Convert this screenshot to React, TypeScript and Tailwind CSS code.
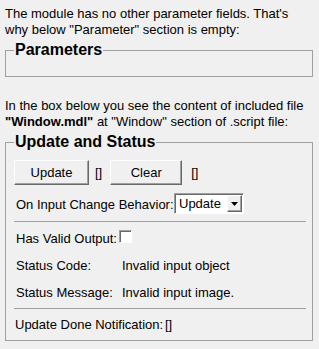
import React from 'react'

function WinButton({ label, className }: { label: string; className?: string }) {
    return (
        <button
            className={
                'h-[25px] bg-[#f0f0f0] border border-t-white border-l-white border-b-[#696969] border-r-[#696969] shadow-[inset_-1px_-1px_0_#a0a0a0] text-[13px] leading-[16px] text-black ' +
                (className ?? '')
            }
        >
            {label}
        </button>
    )
}

function ComboBox({ value }: { value: string }) {
    return (
        <div className="w-[70px] h-[21px] flex items-stretch bg-white border border-t-[#a0a0a0] border-l-[#a0a0a0] border-b-white border-r-white shadow-[inset_1px_1px_0_#696969]">
            <span className="flex-1 pl-[4px] pt-[2px] leading-[16px]">{value}</span>
            <div className="w-[15px] my-[1px] mr-[1px] flex items-center justify-center bg-[#f0f0f0] border border-t-white border-l-white border-b-[#696969] border-r-[#696969] shadow-[inset_-1px_-1px_0_#a0a0a0]">
                <svg width="7" height="4" viewBox="0 0 7 4">
                    <path d="M0 0h7L3.5 4z" fill="#000" />
                </svg>
            </div>
        </div>
    )
}

export default function App() {
    return (
        <div className="w-[319px] h-[349px] overflow-hidden bg-[#f0f0f0] text-black text-[13px] leading-[16px] font-['Liberation_Sans',Arial,sans-serif]">
            {/* intro text */}
            <p className="pt-[6px] pl-[5px] whitespace-nowrap">
                The module has no other parameter fields. That's
                <br />
                why below "Parameter" section is empty:
            </p>

            {/* Parameters group */}
            <fieldset className="mt-[2px] ml-[5px] w-[308px] border border-[#a0a0a0] pl-[8px] pr-[6px]">
                <legend className="px-[1px] text-[16px] leading-[20px] font-bold">Parameters</legend>
                <div className="h-[16px]" />
            </fieldset>

            <p className="mt-[21px] pl-[5px] whitespace-nowrap">
                In the box below you see the content of included file
                <br />
                <b>"Window.mdl"</b> at "Window" section of .script file:
            </p>

            {/* Update and Status group */}
            <fieldset className="mt-[2px] ml-[5px] w-[308px] border border-[#a0a0a0] pl-[8px] pr-[6px] pb-[7px]">
                <legend className="px-[1px] text-[16px] leading-[20px] font-bold">Update and Status</legend>

                <div className="mt-[8px] flex items-center h-[25px]">
                    <WinButton label="Update" className="w-[75px]" />
                    <span className="ml-[6px]">[]</span>
                    <WinButton label="Clear" className="ml-[8px] w-[72px]" />
                    <span className="ml-[9px]">[]</span>
                </div>

                <div className="mt-[8px] flex items-start h-[21px]">
                    <span className="ml-[2px] mt-[4px] w-[158px] whitespace-nowrap">On Input Change Behavior:</span>
                    <ComboBox value="Update" />
                </div>

                <div className="mt-[7px] h-px bg-[#a0a0a0]" />

                <div className="mt-[8px] flex items-start">
                    <span className="ml-[2px] mt-[1px] w-[103px] whitespace-nowrap">Has Valid Output:</span>
                    <div className="w-[13px] h-[13px] bg-white border border-t-[#a0a0a0] border-l-[#a0a0a0] border-b-white border-r-white shadow-[inset_1px_1px_0_#696969]" />
                </div>

                <div className="mt-[11px] flex">
                    <span className="ml-[2px] w-[106px]">Status Code:</span>
                    <span>Invalid input object</span>
                </div>

                <div className="mt-[11px] flex">
                    <span className="ml-[2px] w-[106px]">Status Message:</span>
                    <span>Invalid input image.</span>
                </div>

                <div className="mt-[7px] h-px bg-[#a0a0a0]" />

                <div className="mt-[8px] flex">
                    <span className="ml-[1px] w-[150px] whitespace-nowrap">Update Done Notification:</span>
                    <span>[]</span>
                </div>
            </fieldset>
        </div>
    )
}
